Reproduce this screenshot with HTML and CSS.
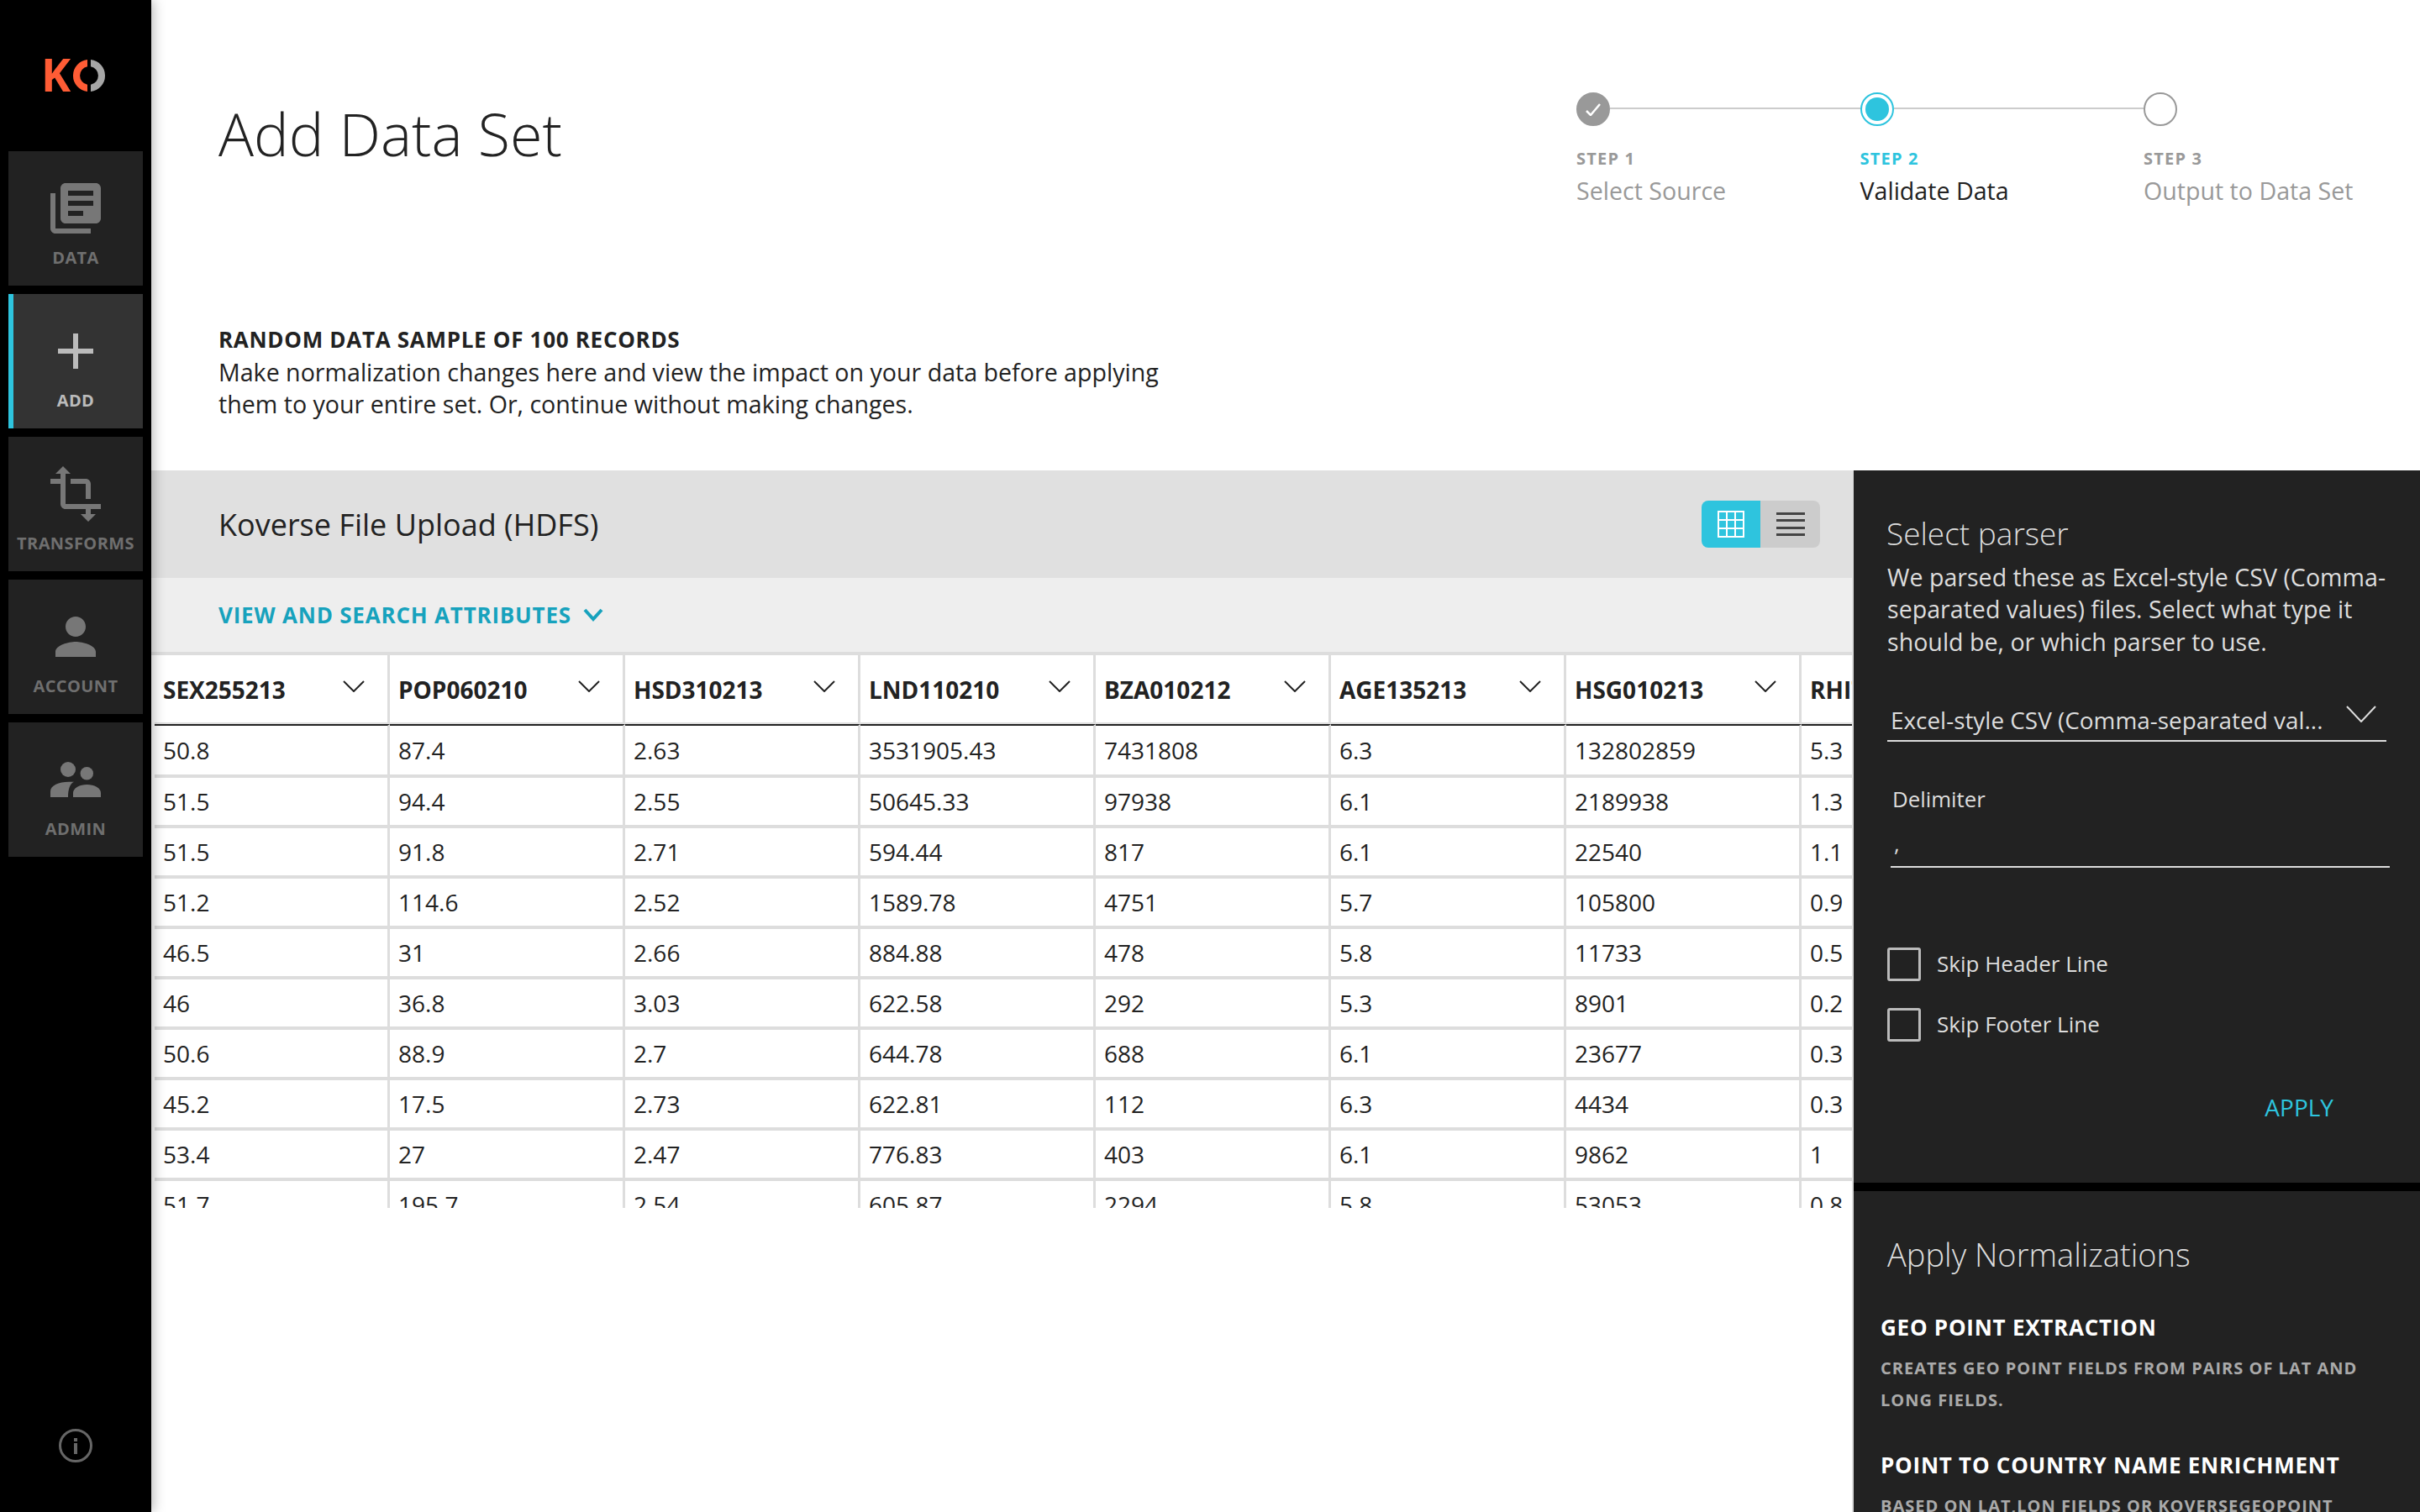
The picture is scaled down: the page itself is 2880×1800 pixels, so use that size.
FILE: index.html
```html
<!DOCTYPE html>
<html lang="en">
<head>
  <meta charset="UTF-8" />
  <title>Add Data Set</title>
  <link rel="stylesheet" href="styles.css">
</head>
<body>
  <aside class="sidebar">
    <div class="logo">
      <svg width="72" height="38" viewBox="0 0 72 38">
        <path d="M50 .1A19 19 0 0 0 50 37.900V29.800A11 11 0 0 1 50 8.200z" fill="#ff5c35"/>
        <path d="M54 .1A19 19 0 0 1 54 37.900V29.800A11 11 0 0 0 54 8.200z" fill="#a6a6a6"/>
        <text class="logo-k" x="-5" y="38">K</text>
      </svg>
    </div>
    <nav class="nav">
      <a class="nav-item">
        <svg class="nav-icon" viewBox="0 0 24 24"><path d="M4 6H2v14c0 1.1.9 2 2 2h14v-2H4V6zm16-4H8c-1.1 0-2 .9-2 2v12c0 1.1.9 2 2 2h12c1.100 0 2-.9 2-2V4c0-1.100-.9-2-2-2zm-1 9H9V9h10v2zm-4 4H9v-2h6v2zm4-8H9V5h10v2z"/></svg>
        <span>DATA</span>
      </a>
      <a class="nav-item active">
        <svg class="nav-icon" viewBox="0 0 24 24"><path d="M19 13h-6v6h-2v-6H5v-2h6V5h2v6h6v2z"/></svg>
        <span>ADD</span>
      </a>
      <a class="nav-item">
        <svg class="nav-icon" viewBox="0 0 24 24"><path d="M22 18v-2H8V4h2L7 1 4 4h2v2H2v2h4v8c0 1.100.9 2 2 2h8v2h-2l3 3 3-3h-2v-2h4zM10 8h6v6h2V8c0-1.100-.9-2-2-2h-6v2z"/></svg>
        <span>TRANSFORMS</span>
      </a>
      <a class="nav-item">
        <svg class="nav-icon" viewBox="0 0 24 24"><path d="M12 12c2.210 0 4-1.790 4-4s-1.790-4-4-4-4 1.790-4 4 1.790 4 4 4zm0 2c-2.670 0-8 1.340-8 4v2h16v-2c0-2.660-5.330-4-8-4z"/></svg>
        <span>ACCOUNT</span>
      </a>
      <a class="nav-item">
        <svg class="nav-icon" viewBox="0 0 72 72"><circle cx="27" cy="24" r="9"/><circle cx="49.300" cy="28.700" r="7.700"/><path d="M6 57V50C6 43 16 38.700 28 38.700H34C29 41 27 48 27 57z"/><path d="M33 57V52C33 46 41 42 49.500 42C58 42 66 46 66 52V57z"/></svg>
        <span>ADMIN</span>
      </a>
    </nav>
    <svg class="info-icon" width="44" height="44" viewBox="0 0 44 44">
      <circle cx="22" cy="22" r="18.500" fill="none" stroke="#666" stroke-width="3"/>
      <rect x="20" y="19" width="4" height="13" fill="#666"/>
      <rect x="20" y="13" width="4" height="4" fill="#666"/>
    </svg>
  </aside>

  <main class="content">
    <section class="top">
      <header class="page-header">
        <h1>Add Data Set</h1>
        <ol class="stepper">
          <li class="step done">
            <div class="step-track">
              <span class="step-dot">
                <svg width="18" height="15" viewBox="0 0 18 15"><path d="M1 9l5 5L17 1" fill="none" stroke="#fff" stroke-width="2.500"/></svg>
              </span>
              <span class="step-line"></span>
            </div>
            <div class="step-num">STEP 1</div>
            <div class="step-name">Select Source</div>
          </li>
          <li class="step current">
            <div class="step-track">
              <span class="step-dot"></span>
              <span class="step-line"></span>
            </div>
            <div class="step-num">STEP 2</div>
            <div class="step-name">Validate Data</div>
          </li>
          <li class="step">
            <div class="step-track">
              <span class="step-dot"></span>
            </div>
            <div class="step-num">STEP 3</div>
            <div class="step-name">Output to Data Set</div>
          </li>
        </ol>
      </header>
      <div class="intro">
        <h3>RANDOM DATA SAMPLE OF 100 RECORDS</h3>
        <p>Make normalization changes here and view the impact on your data before applying<br>them to your entire set. Or, continue without making changes.</p>
      </div>
    </section>

    <section class="workspace">
      <div class="data-panel">
        <div class="panel-title">
          <h2>Koverse File Upload (HDFS)</h2>
          <div class="view-toggle">
            <button class="toggle-btn on">
              <svg width="32" height="32" viewBox="0 0 32 32" fill="none" stroke="#fff" stroke-width="2"><rect x="1" y="1" width="30" height="30"/><path d="M11 1v30M21 1v30M1 11h30M1 21h30"/></svg>
            </button>
            <button class="toggle-btn">
              <svg width="34" height="30" viewBox="0 0 34 30" fill="#444"><rect y="1" width="34" height="3"/><rect y="9" width="34" height="3"/><rect y="18" width="34" height="3"/><rect y="26" width="34" height="3"/></svg>
            </button>
          </div>
        </div>
        <div class="attr-bar">
          <a class="attr-link">VIEW AND SEARCH ATTRIBUTES</a>
          <svg width="24" height="16" viewBox="0 0 24 16" fill="none" stroke="#17a2bd" stroke-width="4"><path d="M2 2l10 11L22 2"/></svg>
        </div>
        <div class="table-wrap">
          <table class="data-table">
            <thead>
              <tr>
                <th><div class="th-inner">SEX255213<svg class="th-arrow" viewBox="0 0 26 14"><path d="M1 1l12 12L25 1"/></svg></div></th>
                <th><div class="th-inner">POP060210<svg class="th-arrow" viewBox="0 0 26 14"><path d="M1 1l12 12L25 1"/></svg></div></th>
                <th><div class="th-inner">HSD310213<svg class="th-arrow" viewBox="0 0 26 14"><path d="M1 1l12 12L25 1"/></svg></div></th>
                <th><div class="th-inner">LND110210<svg class="th-arrow" viewBox="0 0 26 14"><path d="M1 1l12 12L25 1"/></svg></div></th>
                <th><div class="th-inner">BZA010212<svg class="th-arrow" viewBox="0 0 26 14"><path d="M1 1l12 12L25 1"/></svg></div></th>
                <th><div class="th-inner">AGE135213<svg class="th-arrow" viewBox="0 0 26 14"><path d="M1 1l12 12L25 1"/></svg></div></th>
                <th><div class="th-inner">HSG010213<svg class="th-arrow" viewBox="0 0 26 14"><path d="M1 1l12 12L25 1"/></svg></div></th>
                <th><div class="th-inner">RHI725212</div></th>
              </tr>
            </thead>
            <tbody>
              <tr><td>50.8</td><td>87.4</td><td>2.63</td><td>3531905.43</td><td>7431808</td><td>6.3</td><td>132802859</td><td>5.3</td></tr>
              <tr><td>51.5</td><td>94.4</td><td>2.55</td><td>50645.33</td><td>97938</td><td>6.1</td><td>2189938</td><td>1.3</td></tr>
              <tr><td>51.5</td><td>91.8</td><td>2.71</td><td>594.44</td><td>817</td><td>6.1</td><td>22540</td><td>1.1</td></tr>
              <tr><td>51.2</td><td>114.6</td><td>2.52</td><td>1589.78</td><td>4751</td><td>5.7</td><td>105800</td><td>0.9</td></tr>
              <tr><td>46.5</td><td>31</td><td>2.66</td><td>884.88</td><td>478</td><td>5.8</td><td>11733</td><td>0.5</td></tr>
              <tr><td>46</td><td>36.8</td><td>3.03</td><td>622.58</td><td>292</td><td>5.3</td><td>8901</td><td>0.2</td></tr>
              <tr><td>50.6</td><td>88.9</td><td>2.7</td><td>644.78</td><td>688</td><td>6.1</td><td>23677</td><td>0.3</td></tr>
              <tr><td>45.2</td><td>17.5</td><td>2.73</td><td>622.81</td><td>112</td><td>6.3</td><td>4434</td><td>0.3</td></tr>
              <tr><td>53.4</td><td>27</td><td>2.47</td><td>776.83</td><td>403</td><td>6.1</td><td>9862</td><td>1</td></tr>
              <tr><td>51.7</td><td>195.7</td><td>2.54</td><td>605.87</td><td>2294</td><td>5.8</td><td>53053</td><td>0.8</td></tr>
            </tbody>
          </table>
        </div>
      </div>

      <aside class="side-panel">
        <section class="parser">
          <h2>Select parser</h2>
          <p class="parser-desc">We parsed these as Excel-style CSV (Comma-separated values) files. Select what type it should be, or which parser to use.</p>
          <div class="select-box">
            <span class="select-value">Excel-style CSV (Comma-separated val...</span>
            <svg width="36" height="20" viewBox="0 0 36 20" fill="none" stroke="#ddd" stroke-width="2"><path d="M1 1l17 18L35 1"/></svg>
          </div>
          <label class="field-label">Delimiter</label>
          <div class="field-input">,</div>
          <label class="check"><span class="check-box"></span><span class="check-text">Skip Header Line</span></label>
          <label class="check"><span class="check-box"></span><span class="check-text">Skip Footer Line</span></label>
          <div class="apply-row"><a class="apply">APPLY</a></div>
        </section>
        <section class="normalizations">
          <h2>Apply Normalizations</h2>
          <div class="norm-item">
            <h4>GEO POINT EXTRACTION</h4>
            <p>CREATES GEO POINT FIELDS FROM PAIRS OF LAT AND LONG FIELDS.</p>
          </div>
          <div class="norm-item">
            <h4>POINT TO COUNTRY NAME ENRICHMENT</h4>
            <p>BASED ON LAT,LON FIELDS OR KOVERSEGEOPOINT</p>
          </div>
        </section>
      </aside>
    </section>
  </main>
</body>
</html>
```

FILE: styles.css
```css
* {
  box-sizing: border-box;
}
html, body {
  margin: 0;
  height: 100%;
}
body {
  display: flex;
  height: 100vh;
  overflow: hidden;
  font-family: "Open Sans", "Liberation Sans", sans-serif;
  color: #222;
  background: #fff;
}

/* sidebar */
.sidebar {
  position: relative;
  z-index: 2;
  flex: 0 0 180px;
  display: flex;
  flex-direction: column;
  align-items: center;
  background: #000;
  box-shadow: 2px 0 14px rgba(0,0,0,0.3);
}
.logo {
  height: 180px;
  padding-top: 71px;
}
.logo svg {
  display: block;
  overflow: visible;
}
.logo-k {
  font-family: "Open Sans", sans-serif;
  font-weight: 700;
  font-size: 53px;
  fill: #ff5c35;
}
.nav {
  display: flex;
  flex-direction: column;
  gap: 10px;
  width: 160px;
}
.nav-item {
  display: flex;
  flex-direction: column;
  align-items: center;
  height: 160px;
  padding-top: 32px;
  background: #222;
  color: #6f6f6f;
  font-size: 20px;
  font-weight: 700;
  letter-spacing: 0.4px;
}
.nav-item span {
  margin-top: 8px;
  line-height: 30px;
}
.nav-icon {
  width: 72px;
  height: 72px;
  fill: #777;
}
.nav-item.active {
  background: #333;
  border-left: 6px solid #2ec4de;
  padding-right: 6px;
  color: #bbb;
}
.nav-item.active .nav-icon {
  fill: #bbb;
}
.info-icon {
  margin-top: auto;
  margin-bottom: 57px;
}

/* main */
.content {
  flex: 1;
  display: flex;
  flex-direction: column;
  min-width: 0;
}
.top {
  flex: 0 0 560px;
  padding-left: 80px;
}
.page-header {
  display: flex;
  justify-content: space-between;
  height: 385px;
}
h1 {
  margin: 109px 0 0;
  font-size: 70px;
  line-height: 100px;
  font-weight: 300;
}
.stepper {
  display: flex;
  margin: 110px 0 0;
  padding: 0;
  list-style: none;
  width: 1004px;
}
.step {
  flex: 0 0 337.5px;
  color: #999;
}
.step:last-child {
  flex: 1;
}
.step-track {
  display: flex;
  align-items: center;
  height: 40px;
}
.step-dot {
  flex: 0 0 40px;
  height: 40px;
  display: flex;
  align-items: center;
  justify-content: center;
  border: 2px solid #999;
  border-radius: 50%;
  background: #fff;
}
.done .step-dot {
  background: #999;
}
.current .step-dot {
  border-color: #2ec4de;
  padding: 4px;
  background: #2ec4de content-box;
}
.step-line {
  flex: 1;
  height: 2px;
  margin-top: -2px;
  background: #ccc;
}
.step-num {
  margin-top: 26px;
  font-size: 20px;
  line-height: 26px;
  font-weight: 700;
  letter-spacing: 1.2px;
}
.step-name {
  margin-top: 6px;
  font-size: 28.6px;
  line-height: 38px;
}
.current .step-num {
  color: #2ec4de;
}
.current .step-name {
  color: #222;
}
.intro {
  font-size: 28.6px;
  line-height: 38px;
}
.intro h3 {
  margin: 0;
  font-size: 26px;
  font-weight: 700;
  letter-spacing: 0.7px;
}
.intro p {
  margin: 1px 0 0;
}

/* data panel */
.workspace {
  flex: 1;
  display: flex;
  min-height: 0;
}
.data-panel {
  flex: 0 0 2026px;
  min-width: 0;
  border-right: 2px solid #ddd;
}
.panel-title {
  display: flex;
  align-items: center;
  justify-content: space-between;
  height: 128px;
  padding: 0 38px 0 80px;
  background: #e0e0e0;
}
.panel-title h2 {
  margin: 0;
  font-size: 36px;
  font-weight: 400;
}
.view-toggle {
  display: flex;
  height: 56px;
  border-radius: 8px;
  overflow: hidden;
}
.toggle-btn {
  width: 71px;
  display: flex;
  align-items: center;
  justify-content: center;
  padding: 0;
  border: 0;
  background: #ccc;
}
.toggle-btn.on {
  width: 70px;
  background: #2ec4de;
}
.attr-bar {
  display: flex;
  align-items: center;
  gap: 14px;
  height: 92px;
  padding: 0 0 1px 80px;
  background: #eee;
  border-bottom: 4px solid #ddd;
  color: #17a2bd;
}
.attr-link {
  font-size: 26px;
  font-weight: 700;
  letter-spacing: 0.8px;
}
.table-wrap {
  height: 658px;
  margin-left: 4px;
  overflow: hidden;
}
.data-table {
  table-layout: fixed;
  width: 2240px;
  border-collapse: separate;
  border-spacing: 0;
}
.data-table th, .data-table td {
  width: 280px;
  padding: 0 0 0 10px;
  border-right: 3px solid #ddd;
  text-align: left;
  font-size: 28px;
}
.data-table th {
  height: 82px;
  border-bottom: 2px solid #ddd;
  font-weight: 700;
}
.th-inner {
  display: flex;
  align-items: center;
  justify-content: space-between;
  padding: 2px 27px 0 0;
}
.th-arrow {
  flex: 0 0 26px;
  height: 14px;
  margin-top: -8px;
  fill: none;
  stroke: #222;
  stroke-width: 2;
}
.data-table td {
  height: 60px;
  border-bottom: 4px solid #ddd;
}
.data-table tbody tr:first-child td {
  height: 64px;
  border-top: 2px solid #222;
}

/* right panel */
.side-panel {
  flex: 1;
  min-width: 0;
  background: #222;
  color: #ddd;
  overflow: hidden;
}
.side-panel h2 {
  margin: 0;
  font-weight: 300;
  color: #ddd;
}
.parser {
  height: 858px;
  padding: 50px 40px 0;
  border-bottom: 10px solid #000;
}
.parser h2 {
  font-size: 37px;
  line-height: 50px;
  margin-left: -1px;
}
.parser-desc {
  margin: 8px 0 0;
  font-size: 28.6px;
  line-height: 38.3px;
  color: #ddd;
}
.select-box {
  display: flex;
  align-items: flex-start;
  justify-content: space-between;
  height: 55px;
  margin-top: 45px;
  padding: 0 12px 0 4px;
  border-bottom: 2px solid #ddd;
}
.select-value {
  font-size: 27.9px;
  line-height: 40px;
  padding-top: 9px;
  white-space: nowrap;
}
.select-box svg {
  margin-top: 12px;
}
.field-label {
  display: block;
  margin: 50px 0 0 6px;
  font-size: 25.8px;
  line-height: 36px;
}
.field-input {
  height: 64px;
  margin: 0 -4px 0 4px;
  padding: 13px 0 0 4px;
  border-bottom: 2px solid #ddd;
  font-size: 26px;
  line-height: 44px;
}
.check {
  display: flex;
  align-items: center;
  gap: 19px;
  margin-top: 32px;
  height: 40px;
  font-size: 26px;
}
.check-text {
  margin-top: -2px;
}
.field-input + .check {
  margin-top: 95px;
}
.check-box {
  width: 40px;
  height: 40px;
  border: 3px solid #bbb;
  border-radius: 3px;
}
.apply-row {
  display: flex;
  justify-content: flex-end;
  padding-right: 63px;
  margin-top: 58px;
}
.apply {
  font-size: 28px;
  line-height: 40px;
  color: #2ec4de;
}
.normalizations {
  padding: 50px 32px 0;
}
.normalizations h2 {
  font-size: 38px;
  line-height: 50px;
  padding-left: 8px;
}
.norm-item h4 {
  margin: 0;
  font-size: 26px;
  line-height: 36px;
  font-weight: 700;
  letter-spacing: 0.75px;
  color: #fff;
}
.norm-item {
  padding-top: 45px;
}
.norm-item + .norm-item {
  padding-top: 40px;
}
.normalizations h2 + .norm-item {
  padding-top: 44px;
}
.norm-item p {
  margin: 12px 0 0;
  font-size: 20px;
  line-height: 38px;
  font-weight: 700;
  letter-spacing: 1px;
  color: #aaa;
}
```
